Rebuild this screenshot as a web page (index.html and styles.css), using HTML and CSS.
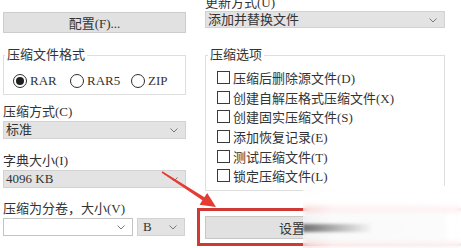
FILE: index.html
```html
<!DOCTYPE html>
<html lang="zh-CN">
<head>
<meta charset="utf-8">
<title>压缩参数</title>
<link rel="stylesheet" href="styles.css">
</head>
<body>
<div class="page">
  <div class="col left">
    <div class="btn cfg">配置(F)...</div>
    <fieldset class="group fmt">
      <legend>压缩文件格式</legend>
      <div class="radios">
        <div class="radio r1"><span class="circle on"></span>RAR</div>
        <div class="radio r2"><span class="circle"></span>RAR5</div>
        <div class="radio r3"><span class="circle"></span>ZIP</div>
      </div>
    </fieldset>
    <div class="lbl gap-a">压缩方式(C)</div>
    <div class="combo tall">标准<svg class="chev" viewBox="0 0 8 5"><polyline points="0.5,0.5 4,4 7.5,0.5"/></svg></div>
    <div class="lbl gap-b">字典大小(I)</div>
    <div class="combo tall">4096 KB<svg class="chev" viewBox="0 0 8 5"><polyline points="0.5,0.5 4,4 7.5,0.5"/></svg></div>
    <div class="lbl gap-c">压缩为分卷，大小(V)</div>
    <div class="split">
      <div class="combo tall white"><svg class="chev" viewBox="0 0 8 5"><polyline points="0.5,0.5 4,4 7.5,0.5"/></svg></div>
      <div class="combo tall unit">B<svg class="chev" viewBox="0 0 8 5"><polyline points="0.5,0.5 4,4 7.5,0.5"/></svg></div>
    </div>
  </div>
  <div class="col right">
    <div class="lbl top">更新方式(U)</div>
    <div class="combo">添加并替换文件<svg class="chev" viewBox="0 0 8 5"><polyline points="0.5,0.5 4,4 7.5,0.5"/></svg></div>
    <fieldset class="group opts">
      <legend>压缩选项</legend>
      <div class="checks">
        <div class="check"><span class="box"></span>压缩后删除源文件(D)</div>
        <div class="check"><span class="box"></span>创建自解压格式压缩文件(X)</div>
        <div class="check"><span class="box"></span>创建固实压缩文件(S)</div>
        <div class="check"><span class="box"></span>添加恢复记录(E)</div>
        <div class="check"><span class="box"></span>测试压缩文件(T)</div>
        <div class="check"><span class="box"></span>锁定压缩文件(L)</div>
      </div>
    </fieldset>
    <div class="btn-wrap">
      <div class="btn set">设置</div>
      <div class="hl"></div>
    </div>
  </div>
  <svg class="arrow" viewBox="0 0 461 248" width="461" height="248">
    <polygon points="162.4,171.3 204.4,197.3 207.2,192.9 216,207 199.6,204.7 202.4,200.3 161.6,172.7"/>
  </svg>
  <div class="fade"><div class="smear"></div></div>
</div>
</body>
</html>
```

FILE: styles.css
```css
html, body {
  margin: 0;
  padding: 0;
  background: #fff;
  overflow: hidden;
}
body {
  width: 461px;
  height: 248px;
  font-family: "Liberation Serif", "Noto Sans CJK SC", serif;
  font-size: 13px;
  color: #333;
}
.page {
  position: relative;
  width: 461px;
  height: 248px;
  display: grid;
  grid-template-columns: 183px 240px;
  column-gap: 19px;
  padding-left: 3px;
  box-sizing: border-box;
  align-items: start;
}
.col {
  display: flex;
  flex-direction: column;
}
.lbl {
  height: 16px;
  line-height: 16px;
  white-space: nowrap;
}
.lbl.top { margin-top: -5px; }
.gap-a { margin-top: 9px; }
.gap-b { margin-top: 14px; }
.gap-c { margin-top: 13px; }

.btn {
  box-sizing: border-box;
  background: #e1e1e1;
  border: 1px solid #cdcdcd;
  display: flex;
  align-items: center;
  justify-content: center;
  white-space: nowrap;
}
.cfg {
  margin-top: 12px;
  height: 21px;
}

.combo {
  position: relative;
  box-sizing: border-box;
  margin-top: 1px;
  height: 17px;
  line-height: 15px;
  background: #e3e3e3;
  border: 1px solid #d2d2d2;
  padding-left: 2px;
  white-space: nowrap;
}
.lbl.top + .combo { margin-top: 0; }
.combo.tall { height: 18px; line-height: 16px; }
.combo.white { background: #fff; border-color: #c4c4c4; }
.chev {
  position: absolute;
  right: 7px;
  top: 6px;
  width: 8px;
  height: 5px;
  fill: none;
  stroke: #7a7a7a;
  stroke-width: 1;
}
.split {
  display: grid;
  grid-template-columns: 130px 48px;
  column-gap: 4px;
  margin-top: 1px;
}
.split .combo { margin-top: 0; }
.combo.unit { padding-left: 5px; }

.group {
  margin: 0;
  min-width: 0;
  border: 1px solid #dedede;
  padding: 0 0 5px 0;
}
.group legend {
  margin-left: 1px;
  padding: 0 2px;
  line-height: 16px;
  height: 16px;
}
.fmt { margin-top: 14px; }
.opts { margin-top: 19px; padding-bottom: 4px; }
.opts legend { margin-left: 2px; }

.radios {
  display: flex;
  margin-top: 10px;
  height: 16px;
  padding-left: 9px;
}
.radio {
  display: flex;
  align-items: center;
  gap: 3px;
  line-height: 16px;
}
.r1 { width: 57px; }
.r2 { width: 61px; }
.circle {
  width: 14px;
  height: 14px;
  box-sizing: border-box;
  border: 1px solid #2e2e2e;
  border-radius: 50%;
  display: flex;
  align-items: center;
  justify-content: center;
}
.circle.on::after {
  content: "";
  width: 8px;
  height: 8px;
  border-radius: 50%;
  background: #1e1e1e;
}

.checks {
  margin-top: 5px;
  padding-left: 11px;
  display: flex;
  flex-direction: column;
}
.check {
  height: 19.6px;
  display: flex;
  align-items: center;
  gap: 3px;
  white-space: nowrap;
}
.box {
  width: 13px;
  height: 13px;
  box-sizing: border-box;
  border: 1px solid #3a3a3a;
  background: #fff;
}

.btn-wrap {
  position: relative;
  margin-top: 25px;
}
.set {
  height: 23px;
  padding-right: 66px;
  border-color: #c6c6c6;
}
.hl {
  position: absolute;
  left: -8px;
  top: -8px;
  right: -22px;
  bottom: -7px;
  border: 3px solid #cf3a35;
}

.arrow {
  position: absolute;
  left: 0;
  top: 0;
  pointer-events: none;
}
.arrow polygon { fill: #e43c33; }

.fade {
  position: absolute;
  left: 303px;
  top: 186px;
  width: 158px;
  height: 62px;
  background: linear-gradient(to right, rgba(255,255,255,0.55), rgba(255,255,255,0.82) 30px, rgba(255,255,255,0.86));
  backdrop-filter: blur(3px);
}
.smear {
  position: absolute;
  left: 0;
  top: 38px;
  width: 70px;
  height: 8px;
  background: linear-gradient(to right, rgba(70,70,70,0.75), rgba(130,130,130,0));
  filter: blur(1.5px);
}
```
